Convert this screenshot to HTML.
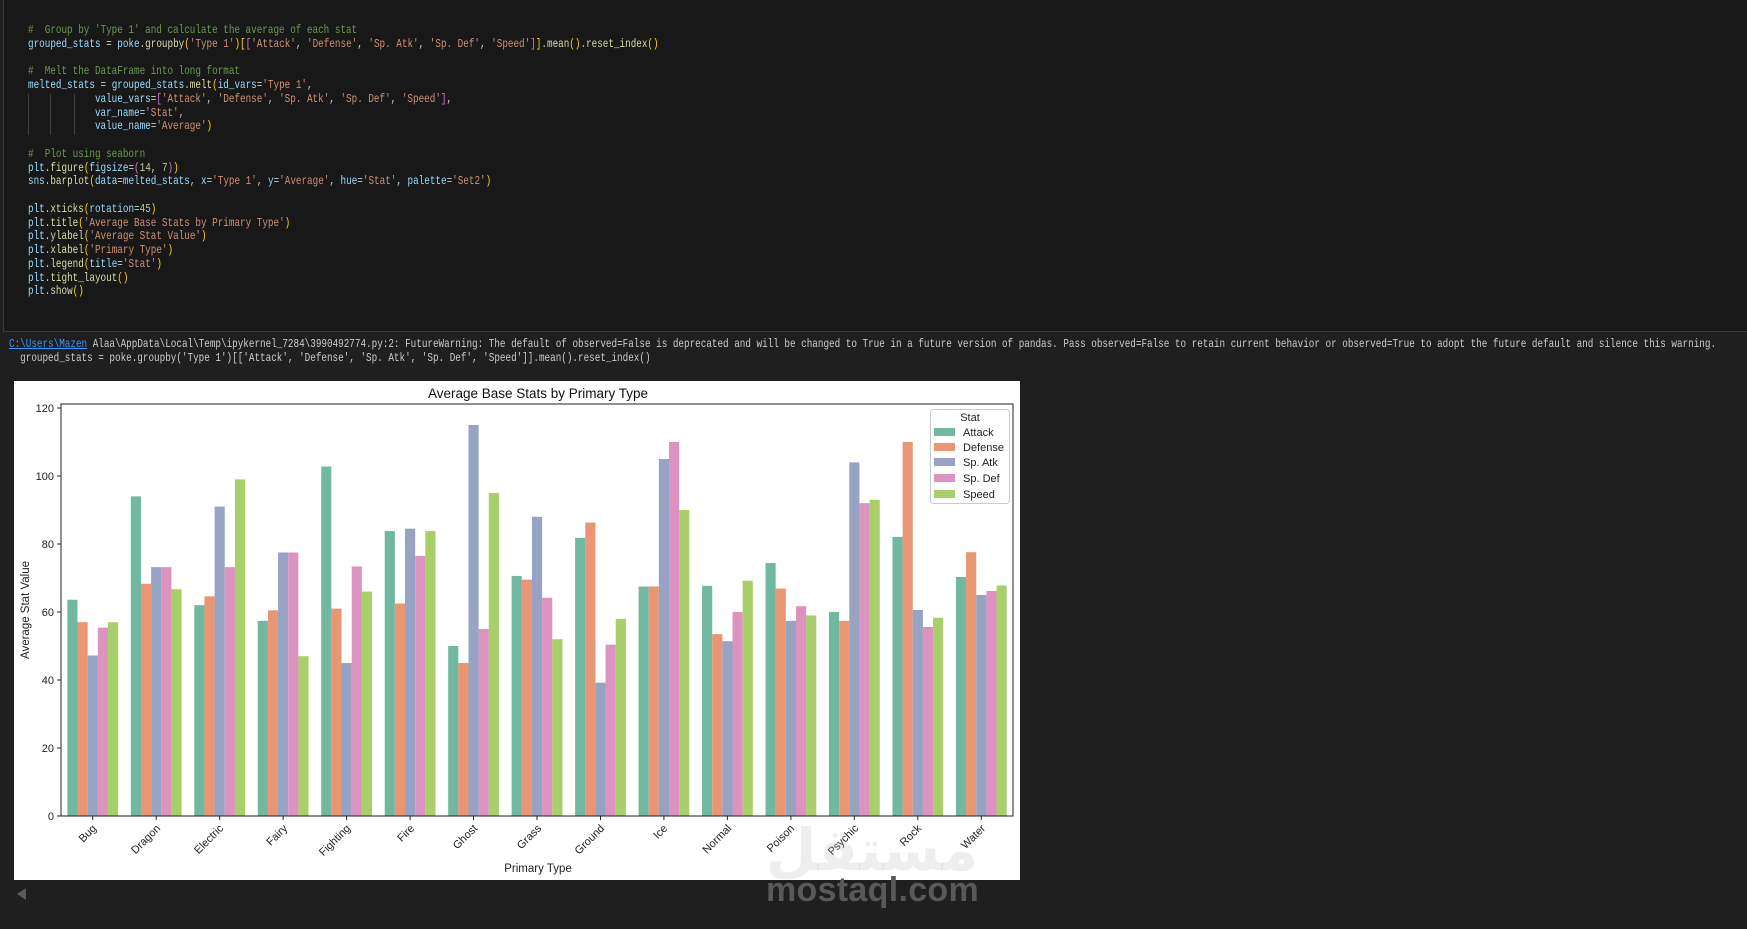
<!DOCTYPE html>
<html><head><meta charset="utf-8"><style>
html,body{margin:0;padding:0;background:#1f1f1f;width:1747px;height:929px;overflow:hidden;position:relative}
.cell{position:absolute;left:3px;top:-2px;width:1750px;height:334px;background:#181818;border:1px solid #3c3c3c;box-sizing:border-box}
pre{margin:0;font-family:"Liberation Mono",monospace;font-size:11.8px;line-height:13.75px;color:#cccccc;position:absolute;left:28px;top:24px;transform-origin:0 0;transform:scaleX(0.788)}
.c{color:#6a9955}.v{color:#9cdcfe}.f{color:#dcdcaa}.s{color:#ce9178}.n{color:#b5cea8}.b1{color:#ffd700}.b2{color:#da70d6}.b3{color:#179fff}
.g{position:absolute;width:1px;background:#404040;top:94px;height:41px}
.warn{position:absolute;left:9px;top:338px;font-family:"Liberation Mono",monospace;font-size:11.8px;line-height:13.75px;color:#cccccc;white-space:pre;margin:0;transform-origin:0 0;transform:scaleX(0.788)}
.warn a{color:#3794ff;text-decoration:underline}
.plot{position:absolute;left:14px;top:381px;width:1006px;height:499px;background:#fff}
.wm{position:absolute;left:766px;top:871px;font-family:"Liberation Sans",sans-serif;font-weight:bold;font-size:34px;color:#595959;letter-spacing:0.3px}
</style></head><body>
<div class="cell"></div>
<div class="g" style="left:28px"></div><div class="g" style="left:50px"></div><div class="g" style="left:74px"></div>
<pre><span class="c">#  Group by 'Type 1' and calculate the average of each stat</span>
<span class="v">grouped_stats</span> = <span class="v">poke</span>.<span class="f">groupby</span><span class="b1">(</span><span class="s">'Type 1'</span><span class="b1">)</span><span class="b1">[</span><span class="b2">[</span><span class="s">'Attack'</span>, <span class="s">'Defense'</span>, <span class="s">'Sp. Atk'</span>, <span class="s">'Sp. Def'</span>, <span class="s">'Speed'</span><span class="b2">]</span><span class="b1">]</span>.<span class="f">mean</span><span class="b1">()</span>.<span class="f">reset_index</span><span class="b1">()</span>

<span class="c">#  Melt the DataFrame into long format</span>
<span class="v">melted_stats</span> = <span class="v">grouped_stats</span>.<span class="f">melt</span><span class="b1">(</span><span class="v">id_vars</span>=<span class="s">'Type 1'</span>,
            <span class="v">value_vars</span>=<span class="b2">[</span><span class="s">'Attack'</span>, <span class="s">'Defense'</span>, <span class="s">'Sp. Atk'</span>, <span class="s">'Sp. Def'</span>, <span class="s">'Speed'</span><span class="b2">]</span>,
            <span class="v">var_name</span>=<span class="s">'Stat'</span>,
            <span class="v">value_name</span>=<span class="s">'Average'</span><span class="b1">)</span>

<span class="c">#  Plot using seaborn</span>
<span class="v">plt</span>.<span class="f">figure</span><span class="b1">(</span><span class="v">figsize</span>=<span class="b2">(</span><span class="n">14</span>, <span class="n">7</span><span class="b2">)</span><span class="b1">)</span>
<span class="v">sns</span>.<span class="f">barplot</span><span class="b1">(</span><span class="v">data</span>=<span class="v">melted_stats</span>, <span class="v">x</span>=<span class="s">'Type 1'</span>, <span class="v">y</span>=<span class="s">'Average'</span>, <span class="v">hue</span>=<span class="s">'Stat'</span>, <span class="v">palette</span>=<span class="s">'Set2'</span><span class="b1">)</span>

<span class="v">plt</span>.<span class="f">xticks</span><span class="b1">(</span><span class="v">rotation</span>=<span class="n">45</span><span class="b1">)</span>
<span class="v">plt</span>.<span class="f">title</span><span class="b1">(</span><span class="s">'Average Base Stats by Primary Type'</span><span class="b1">)</span>
<span class="v">plt</span>.<span class="f">ylabel</span><span class="b1">(</span><span class="s">'Average Stat Value'</span><span class="b1">)</span>
<span class="v">plt</span>.<span class="f">xlabel</span><span class="b1">(</span><span class="s">'Primary Type'</span><span class="b1">)</span>
<span class="v">plt</span>.<span class="f">legend</span><span class="b1">(</span><span class="v">title</span>=<span class="s">'Stat'</span><span class="b1">)</span>
<span class="v">plt</span>.<span class="f">tight_layout</span><span class="b1">()</span>
<span class="v">plt</span>.<span class="f">show</span><span class="b1">()</span></pre>
<div class="warn"><a>C:\Users\Mazen</a> Alaa\AppData\Local\Temp\ipykernel_7284\3990492774.py:2: FutureWarning: The default of observed=False is deprecated and will be changed to True in a future version of pandas. Pass observed=False to retain current behavior or observed=True to adopt the future default and silence this warning.
  grouped_stats = poke.groupby('Type 1')[['Attack', 'Defense', 'Sp. Atk', 'Sp. Def', 'Speed']].mean().reset_index()</div>
<div class="plot"></div>
<svg width="1747" height="929" style="position:absolute;left:0;top:0" font-family="Liberation Sans, DejaVu Sans, sans-serif">
<text x="538" y="398" font-size="13.5" text-anchor="middle" fill="#111">Average Base Stats by Primary Type</text>
<g transform="translate(61 816) scale(63.47 -3.4)">
<g fill="#70b8a0">
<rect x="0.1" y="0" width="0.16" height="63.6"/><rect x="1.1" width="0.16" height="94"/><rect x="2.1" width="0.16" height="62"/><rect x="3.1" width="0.16" height="57.4"/><rect x="4.1" width="0.16" height="102.8"/><rect x="5.1" width="0.16" height="83.8"/><rect x="6.1" width="0.16" height="50"/><rect x="7.1" width="0.16" height="70.6"/><rect x="8.1" width="0.16" height="81.8"/><rect x="9.1" width="0.16" height="67.5"/><rect x="10.1" width="0.16" height="67.7"/><rect x="11.1" width="0.16" height="74.4"/><rect x="12.1" width="0.16" height="60"/><rect x="13.1" width="0.16" height="82.1"/><rect x="14.1" width="0.16" height="70.3"/>
</g>
<g fill="#e99675">
<rect x="0.26" width="0.16" height="57"/><rect x="1.26" width="0.16" height="68.3"/><rect x="2.26" width="0.16" height="64.6"/><rect x="3.26" width="0.16" height="60.5"/><rect x="4.26" width="0.16" height="61"/><rect x="5.26" width="0.16" height="62.5"/><rect x="6.26" width="0.16" height="45"/><rect x="7.26" width="0.16" height="69.5"/><rect x="8.26" width="0.16" height="86.3"/><rect x="9.26" width="0.16" height="67.5"/><rect x="10.26" width="0.16" height="53.5"/><rect x="11.26" width="0.16" height="66.9"/><rect x="12.26" width="0.16" height="57.4"/><rect x="13.26" width="0.16" height="110"/><rect x="14.26" width="0.16" height="77.6"/>
</g>
<g fill="#96a3c3">
<rect x="0.42" width="0.16" height="47.2"/><rect x="1.42" width="0.16" height="73.2"/><rect x="2.42" width="0.16" height="91"/><rect x="3.42" width="0.16" height="77.5"/><rect x="4.42" width="0.16" height="45"/><rect x="5.42" width="0.16" height="84.5"/><rect x="6.42" width="0.16" height="115"/><rect x="7.42" width="0.16" height="88"/><rect x="8.42" width="0.16" height="39.2"/><rect x="9.42" width="0.16" height="105"/><rect x="10.42" width="0.16" height="51.4"/><rect x="11.42" width="0.16" height="57.4"/><rect x="12.42" width="0.16" height="104"/><rect x="13.42" width="0.16" height="60.6"/><rect x="14.42" width="0.16" height="65"/>
</g>
<g fill="#dc93bf">
<rect x="0.58" width="0.16" height="55.4"/><rect x="1.58" width="0.16" height="73.2"/><rect x="2.58" width="0.16" height="73.2"/><rect x="3.58" width="0.16" height="77.5"/><rect x="4.58" width="0.16" height="73.4"/><rect x="5.58" width="0.16" height="76.5"/><rect x="6.58" width="0.16" height="55"/><rect x="7.58" width="0.16" height="64.2"/><rect x="8.58" width="0.16" height="50.4"/><rect x="9.58" width="0.16" height="110"/><rect x="10.58" width="0.16" height="60"/><rect x="11.58" width="0.16" height="61.7"/><rect x="12.58" width="0.16" height="92"/><rect x="13.58" width="0.16" height="55.6"/><rect x="14.58" width="0.16" height="66.2"/>
</g>
<g fill="#a9cf6b">
<rect x="0.74" width="0.16" height="57"/><rect x="1.74" width="0.16" height="66.7"/><rect x="2.74" width="0.16" height="99"/><rect x="3.74" width="0.16" height="47"/><rect x="4.74" width="0.16" height="66"/><rect x="5.74" width="0.16" height="83.8"/><rect x="6.74" width="0.16" height="95"/><rect x="7.74" width="0.16" height="52"/><rect x="8.74" width="0.16" height="58"/><rect x="9.74" width="0.16" height="90"/><rect x="10.74" width="0.16" height="69.2"/><rect x="11.74" width="0.16" height="59"/><rect x="12.74" width="0.16" height="93"/><rect x="13.74" width="0.16" height="58.3"/><rect x="14.74" width="0.16" height="67.8"/>
</g>
</g>
<rect x="61" y="404" width="952" height="412" fill="none" stroke="#222" stroke-width="1"/>
<g stroke="#222" stroke-width="1">
<line x1="57" y1="816" x2="61" y2="816"/><line x1="57" y1="748" x2="61" y2="748"/><line x1="57" y1="680" x2="61" y2="680"/><line x1="57" y1="612" x2="61" y2="612"/><line x1="57" y1="544" x2="61" y2="544"/><line x1="57" y1="476" x2="61" y2="476"/><line x1="57" y1="408" x2="61" y2="408"/>
</g>
<g font-size="11" fill="#222" text-anchor="end">
<text x="54" y="820">0</text><text x="54" y="752">20</text><text x="54" y="684">40</text><text x="54" y="616">60</text><text x="54" y="548">80</text><text x="54" y="480">100</text><text x="54" y="412">120</text>
</g>
<g stroke="#222"><line x1="92.7" y1="816" x2="92.7" y2="820"/><line x1="156.2" y1="816" x2="156.2" y2="820"/><line x1="219.7" y1="816" x2="219.7" y2="820"/><line x1="283.1" y1="816" x2="283.1" y2="820"/><line x1="346.6" y1="816" x2="346.6" y2="820"/><line x1="410.1" y1="816" x2="410.1" y2="820"/><line x1="473.5" y1="816" x2="473.5" y2="820"/><line x1="537" y1="816" x2="537" y2="820"/><line x1="600.5" y1="816" x2="600.5" y2="820"/><line x1="663.9" y1="816" x2="663.9" y2="820"/><line x1="727.4" y1="816" x2="727.4" y2="820"/><line x1="790.9" y1="816" x2="790.9" y2="820"/><line x1="854.3" y1="816" x2="854.3" y2="820"/><line x1="917.8" y1="816" x2="917.8" y2="820"/><line x1="981.3" y1="816" x2="981.3" y2="820"/></g>
<g font-size="11" fill="#222" text-anchor="end">
<text transform="translate(97 829) rotate(-45)">Bug</text>
<text transform="translate(161 829) rotate(-45)">Dragon</text>
<text transform="translate(224 829) rotate(-45)">Electric</text>
<text transform="translate(288 829) rotate(-45)">Fairy</text>
<text transform="translate(351 829) rotate(-45)">Fighting</text>
<text transform="translate(415 829) rotate(-45)">Fire</text>
<text transform="translate(478 829) rotate(-45)">Ghost</text>
<text transform="translate(542 829) rotate(-45)">Grass</text>
<text transform="translate(605 829) rotate(-45)">Ground</text>
<text transform="translate(668 829) rotate(-45)">Ice</text>
<text transform="translate(732 829) rotate(-45)">Normal</text>
<text transform="translate(795 829) rotate(-45)">Poison</text>
<text transform="translate(859 829) rotate(-45)">Psychic</text>
<text transform="translate(922 829) rotate(-45)">Rock</text>
<text transform="translate(986 829) rotate(-45)">Water</text>
</g>
<text x="538" y="872" font-size="11.5" text-anchor="middle" fill="#222">Primary Type</text>
<text transform="translate(29 610) rotate(-90)" font-size="11.5" text-anchor="middle" fill="#222">Average Stat Value</text>
<rect x="930.5" y="409.5" width="79" height="94" rx="3" fill="#fff" fill-opacity="0.85" stroke="#ccc"/>
<text x="970" y="421" font-size="11" text-anchor="middle" fill="#222">Stat</text>
<g font-size="11" fill="#222">
<rect x="934" y="428" width="21" height="8" fill="#70b8a0"/><text x="963" y="436">Attack</text>
<rect x="934" y="443" width="21" height="8" fill="#e99675"/><text x="963" y="451">Defense</text>
<rect x="934" y="458" width="21" height="8" fill="#96a3c3"/><text x="963" y="466">Sp. Atk</text>
<rect x="934" y="474" width="21" height="8" fill="#dc93bf"/><text x="963" y="482">Sp. Def</text>
<rect x="934" y="490" width="21" height="8" fill="#a9cf6b"/><text x="963" y="498">Speed</text>
</g>
<text x="872" y="870" font-size="58" font-weight="bold" text-anchor="middle" fill="#bbb" fill-opacity="0.25" font-family="Noto Sans CJK SC, DejaVu Sans, sans-serif">مستقل</text>
<polygon points="26,888 26,900 17,894" fill="#5a5a5a"/>
</svg>
<div class="wm">mostaql.com</div>
</body></html>
